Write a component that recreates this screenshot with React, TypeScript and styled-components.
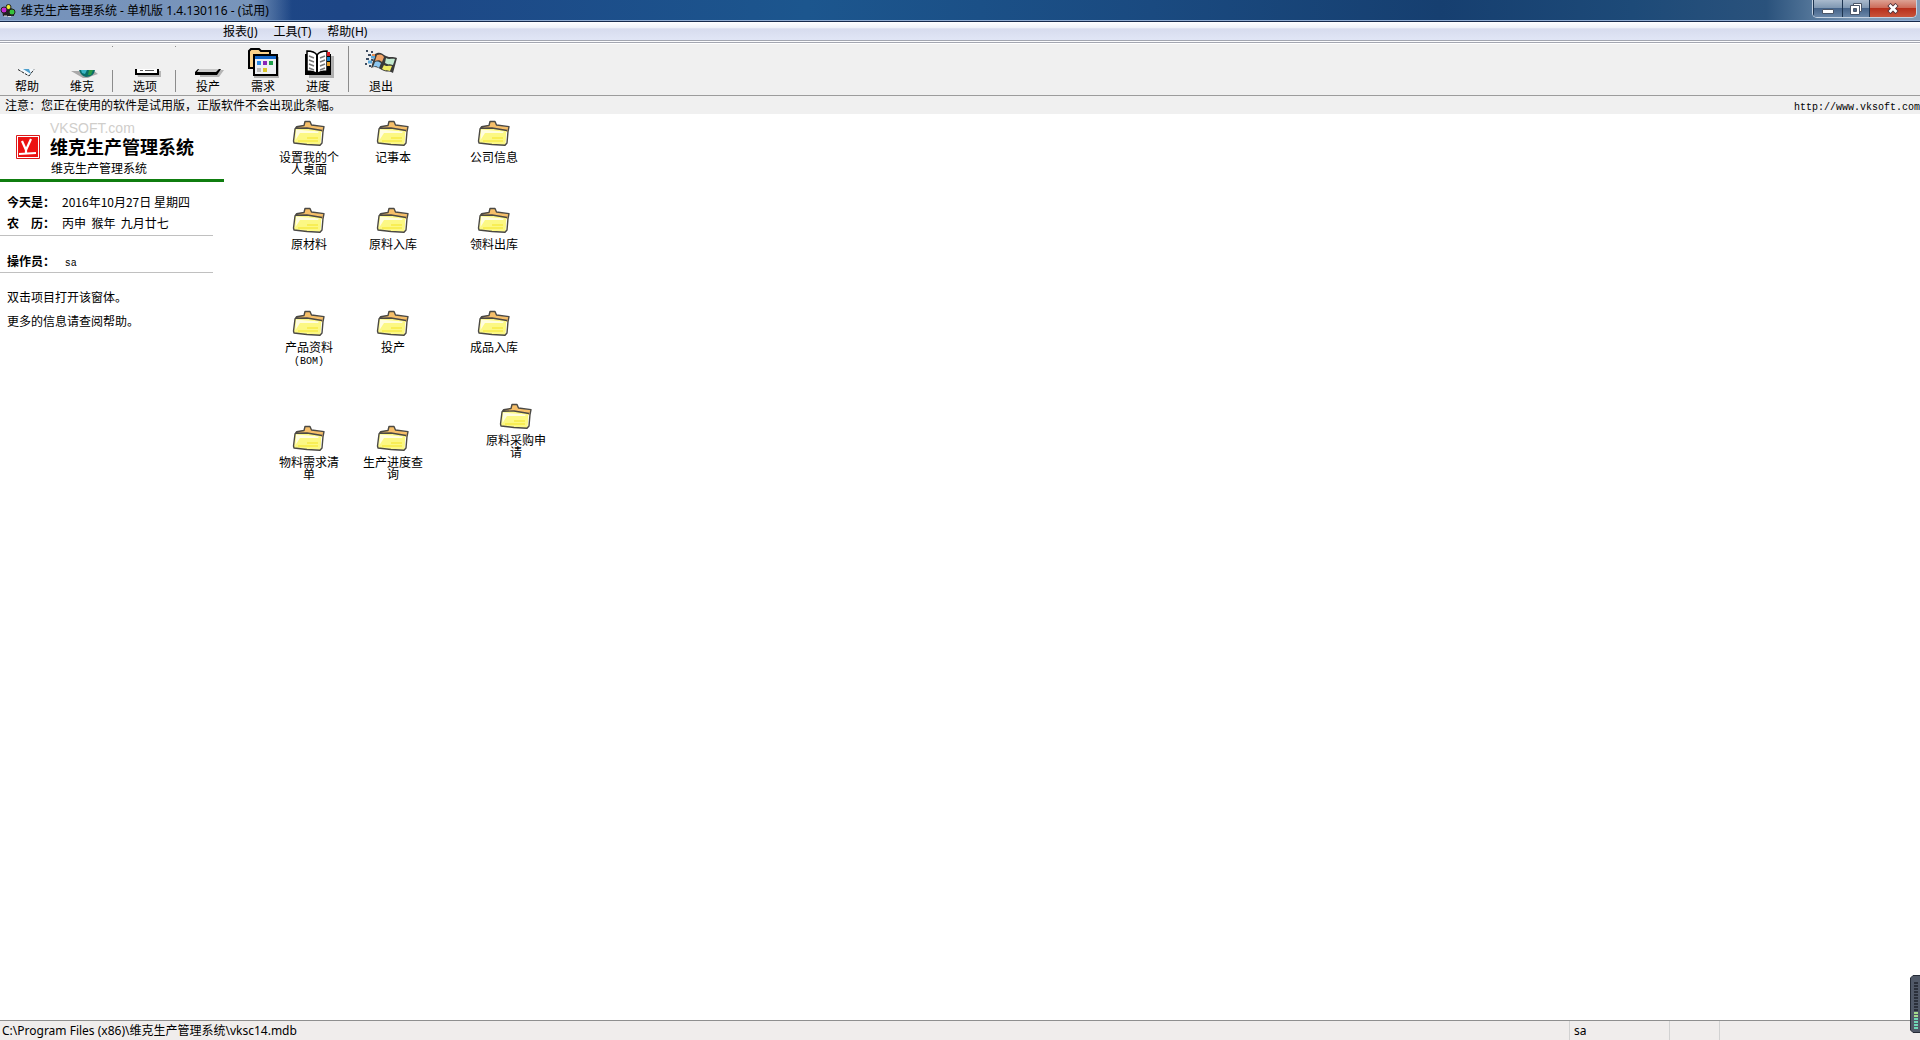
import React from "react";
import styled, { createGlobalStyle } from "styled-components";

const song = `"Noto Sans CJK SC", sans-serif`;
const yahei = `"Noto Sans", "Noto Sans CJK SC", sans-serif`;

const GlobalStyle = createGlobalStyle`
  * { box-sizing: border-box; }
  html, body, #root { height: 100%; margin: 0; }
  body { background: #fff; color: #000; font: 12px/16px ${song}; }
  button { border: 0; padding: 0; margin: 0; background: none; color: inherit; font: inherit; }
  p, h1, h2, dl, dd, dt { margin: 0; font-weight: 400; font-size: 12px; }
`;

const Window = styled.div`
  height: 100vh;
  display: flex;
  flex-direction: column;
  overflow: hidden;
  position: relative;
`;

const TitleBar = styled.header`
  flex: none;
  height: 22px;
  display: flex;
  align-items: flex-start;
  justify-content: space-between;
  padding-right: 3px;
  border-bottom: 1px solid #16294a;
  box-shadow: inset 0 -1px #8fabd0;
  background:
    linear-gradient(90deg, rgba(122, 150, 190, 0.95) 0, rgba(130, 157, 192, 0.9) 250px, rgba(120, 150, 190, 0) 292px),
    linear-gradient(90deg, #1f4b87 0, #1d4585 18%, #1c568e 42%, #1a4a80 60%, #163f70 75%, #1d4a78 85%, #2a527c 92%, #7f9bb8 97%);
`;

const Caption = styled.div`
  display: flex;
  align-items: center;
  gap: 5px;
  height: 20px;
`;

const Title = styled.h1`
  font-family: ${yahei};
  line-height: 20px;
  padding-top: 2px;
  white-space: pre;
`;

const WindowButtons = styled.div`
  display: flex;
  height: 18px;
  border: 1px solid #c4d2e2;
  border-top: 0;
  border-radius: 0 0 5px 5px;
  overflow: hidden;
`;

const WindowButton = styled.button<{ $w: number; $close?: boolean }>`
  width: ${(p) => p.$w}px;
  display: flex;
  align-items: center;
  justify-content: center;
  border-left: 1px solid #1d3450;
  background: ${(p) =>
    p.$close
      ? "linear-gradient(#dda193 0, #cd6c5a 45%, #b8301c 50%, #c9543a 100%)"
      : "linear-gradient(#a9bacd 0, #8098b3 45%, #46648a 50%, #6a87a8 100%)"};
`;

const MenuBar = styled.nav`
  flex: none;
  height: 21px;
  display: flex;
  align-items: center;
  gap: 16px;
  padding: 2px 0 0 223px;
  border-bottom: 3px double #a3a6b0;
  background: linear-gradient(#fff 0, #eef1f8 32%, #d7dcee 38%, #e1e6f6 100%);
`;

const MenuItem = styled.button`
  font-family: ${yahei};
  line-height: 18px;
  white-space: nowrap;
`;

const Toolbar = styled.div`
  flex: none;
  height: 53px;
  display: flex;
  background: #f0f0f0;
  border-top: 1px solid #fff;
  border-bottom: 1px solid #9c9c9c;
`;

const ToolButton = styled.button`
  width: 55px;
  display: flex;
  flex-direction: column;
  align-items: center;
  padding: 4px 1px 0 0;
`;

const ToolSeparator = styled.div<{ $short?: boolean }>`
  width: 8px;
  display: flex;
  flex-direction: column;
  justify-content: space-between;
  padding: 2px 0 3px 2px;

  &::before {
    content: "";
    width: 1px;
    height: 1px;
    background: #8c8c8c;
  }
  &::after {
    content: "";
    width: 1px;
    height: ${(p) => (p.$short ? 22 : 45)}px;
    background: #8c8c8c;
  }
`;

const Notice = styled.div`
  flex: none;
  height: 18px;
  display: flex;
  justify-content: space-between;
  align-items: center;
  padding-left: 5px;
  background: #f0f0f0;
`;

const SmallMono = styled.span`
  font-family: "Liberation Mono", monospace;
  font-size: 10px;
  line-height: 10px;
`;

const SiteLink = styled.a`
  color: #000;
  text-decoration: none;
`;

const Body = styled.div`
  flex: 1;
  min-height: 0;
  display: flex;
`;

const Sidebar = styled.aside`
  width: 224px;
  flex: none;
`;

const Brand = styled.div`
  display: flex;
  align-items: center;
  gap: 10px;
  height: 68px;
  padding: 0 0 0 16px;
  border-bottom: 3px solid #0f7d0f;
`;

const BrandText = styled.div`
  padding-top: 6px;
`;

const BrandSite = styled.p`
  color: #d0cecb;
  font: 14px/16px "Liberation Sans", sans-serif;
`;

const BrandName = styled.h2`
  font-size: 18px;
  line-height: 20px;
  font-weight: 700;
`;

const BrandSub = styled.p`
  line-height: 24px;
  padding-left: 1px;
`;

const InfoBlock = styled.dl<{ $top: number; $bottom: number }>`
  width: 213px;
  padding: ${(p) => `${p.$top}px 0 ${p.$bottom}px 7px`};
  border-bottom: 1px solid #c0c0c0;
`;

const InfoRow = styled.div`
  display: flex;
  height: 21px;
  line-height: 21px;
  white-space: nowrap;
`;

const InfoLabel = styled.dt`
  width: 55px;
  font-weight: 700;
`;

const InfoValue = styled.dd`
  white-space: pre;
`;

const Hints = styled.div`
  padding: 12px 0 0 7px;
  line-height: 24px;
`;

const Desktop = styled.main`
  flex: 1;
  position: relative;
  overflow: hidden;
`;

const Shortcut = styled.button`
  position: absolute;
  width: 60px;
  display: flex;
  flex-direction: column;
  align-items: center;
  gap: 4px;
  line-height: 12px;
`;

const StatusBar = styled.footer`
  flex: none;
  height: 20px;
  display: flex;
  border-top: 1px solid #8f8f8f;
  background: #f0edec;
  font-family: ${yahei};
  line-height: 20px;
`;

const StatusCell = styled.div<{ $w?: number }>`
  ${(p) => (p.$w ? `width: ${p.$w}px; flex: none; border-left: 1px solid #d2d2d2; padding-left: 4px;` : "flex: 1; padding-left: 2px;")}
`;

const Meter = styled.div`
  position: absolute;
  right: 0;
  bottom: 7px;
  width: 10px;
  height: 58px;
`;

function AppIcon() {
  return (
    <svg width="16" height="18" viewBox="0 0 16 18">
      <path d="M2 9 8 5 14 9V15H3Z" fill="#222" />
      <circle cx="4" cy="9" r="3" fill="#c22ad0" stroke="#222" />
      <circle cx="8.5" cy="6" r="2.5" fill="#f2ee38" stroke="#222" />
      <circle cx="12" cy="11" r="3" fill="#35c23c" stroke="#222" />
      <path d="M4 15h3M8 15.500h3" stroke="#ddd" />
    </svg>
  );
}

function FolderIcon() {
  return (
    <svg width="34" height="27" viewBox="0 0 34 27">
      <path d="M4 7 12 5 13 1.500H18L19.500 5 32 7 30.500 12 5 9Z" fill="#f6bf69" />
      <path d="M3 8.500 15 8 29.500 10.500 28.500 25 2 23Z" fill="#fcf884" />
      <path d="M4 9.500 27 11.500 26 13 8 13 3.500 20Z" fill="#fffde0" />
      <path d="M6 21h20M15 18h11" fill="none" stroke="#f8ee55" strokeWidth="2" />
      <path d="M12 5.500 13 1.500H18L19.500 5 32 6.600 31 11.500 30 23 28 25.300 15 24.500 2 23 1.500 21 3 9 4.500 6.800ZM4 8.200 15 8 30 10.500" fill="none" stroke="#4b4944" strokeWidth="1.400" strokeLinejoin="round" />
    </svg>
  );
}

function ToolIcon({ name }: { name: string }) {
  return (
    <svg width="34" height="30" viewBox="0 0 34 30">
      {name === "help" && (
        <>
          <path d="M8 21h17l-4 6-3 1z" fill="#f4f9fd" />
          <path d="M13 21h6l2 5z" fill="#4f9fcc" />
          <path d="M8 21.500l11 6.500 5-6.500" fill="none" stroke="#222" strokeDasharray="3 1" />
        </>
      )}
      {name === "vk" && (
        <>
          <path d="M6 23h23l4 3-6 2-4 2H18z" fill="#a9a9a9" />
          <path d="M14 22h16q-1 7-9 7-5-1-7-7z" fill="#096d68" />
          <path d="M16 22h6l-2 4-3-1z" fill="#39b4c4" />
          <path d="M24 22h4l-2 5-3 0z" fill="#2b9a45" />
        </>
      )}
      {name === "options" && (
        <>
          <path d="M8 23h25v6H10z" fill="#b5b5b5" />
          <path d="M7 21h24v6H7z" fill="#000" />
          <path d="M9 21h20v4H9z" fill="#fff" />
          <path d="M12 22.500h3M17 22.500h9" stroke="#555" />
        </>
      )}
      {name === "make" && (
        <>
          <path d="M9 26l21-4h3l-5 7H9z" fill="#b5b5b5" />
          <path d="M4 24l3-3h23l-4 6H4z" fill="#000" />
          <path d="M8 21h20l-3 3H6z" fill="#c9c9c9" />
        </>
      )}
      {name === "need" && (
        <>
          <path d="M8 9h25v21H8z" fill="#b0b0b0" />
          <path d="M3 20V3l2-2h8l2 2h9v8H10v9z" fill="#fbd38a" stroke="#000" strokeWidth="2" />
          <path d="M8 7h23v20H8z" fill="#eef0f4" stroke="#000" strokeWidth="2" />
          <path d="M9 8h21v3H9z" fill="#1467c8" />
          <path d="M11 13h4v4h-4z" fill="#2c8be6" />
          <path d="M17 13h4v4h-4z" fill="#8a26b8" />
          <path d="M23 13h4v4h-4z" fill="#1da04a" />
          <path d="M11 20h4v4h-4z" fill="#bbb" />
          <path d="M17 20h4v4h-4z" fill="#dac62d" />
        </>
      )}
      {name === "progress" && (
        <>
          <path d="M8 8h25v22H8z" fill="#b0b0b0" />
          <path d="M4 6h26v21H4z" fill="#000" />
          <path d="M6 3c4 0 8 1 10 4 2-3 6-4 10-4v20c-4 0-8 1-10 3-2-2-6-3-10-3z" fill="#fff" stroke="#000" strokeWidth="1.500" />
          <path d="M16 6v19" stroke="#000" strokeWidth="2" />
          <path d="M8 8l5 2M8 12l5 2M8 16l5 2M8 20l5 2M24 8l-5 2M24 12l-5 2M24 16l-5 2M24 20l-5 2" stroke="#777" strokeWidth="1.400" />
          <path d="M26 4h3v4h-3z" fill="#d91824" />
          <path d="M26 9h3v4h-3z" fill="#1782c9" />
          <path d="M26 14h3v4h-3z" fill="#e8a12e" />
        </>
      )}
      {name === "exit" && (
        <>
          <path d="M11 6c5-3 7 0 11 2s7 0 11 2l-4 15c-4-3-6 0-11-3S11 18 7 20z" fill="#3a3a3a" />
          <path d="M13 7c3-1 5-1 7 2l-2 5c-2-2-4-2-7-1z" fill="#f0a468" />
          <path d="M22 10c3 2 6 0 9 1l-2 6c-3-1-5 0-8-2z" fill="#c4ead0" />
          <path d="M11 14c3-1 4 0 6 1l-2 5c-2-2-4-2-6-1z" fill="#8cc6f0" />
          <path d="M20 17c3 2 5 0 8 1l-2 5c-3-1-5 0-8-2z" fill="#f1ec62" />
          <path d="M2 3h2M4 7h3M2 11h3M7 12h2M1 16h2M5 18h2M7 4h2" stroke="#3c4c61" strokeWidth="2" />
          <path d="M7 9h4M4 14h4" stroke="#5aa9dc" strokeWidth="3" />
          <path d="M8 7h3" stroke="#e59055" strokeWidth="2" />
        </>
      )}
    </svg>
  );
}

function LogoIcon() {
  return (
    <svg width="24" height="24" viewBox="0 0 24 24">
      <path d="M.5.5h23v23H.5z" fill="#fff" stroke="#d91a1a" />
      <path d="M2 2h20v20H2z" fill="#ec1111" />
      <path d="M6 6l4 9L15 4M10 15v3M3 19l17-1" fill="none" stroke="#fff" strokeWidth="2.200" />
    </svg>
  );
}

function MeterIcon() {
  const bars = Array.from({ length: 16 }, (_, i) => i);
  return (
    <svg width="10" height="58" viewBox="0 0 10 58">
      <path d="M11 .5H3L.5 3v52L3 57.500H11z" fill="#515968" stroke="#252b36" />
      {bars.map((i) => (
        <path key={i} d={`M4 ${8 + i * 3}h4`} stroke={i < 10 ? "#2b303b" : i < 12 ? "#a6dc8c" : "#6fd8b6"} strokeWidth="2" />
      ))}
    </svg>
  );
}

const shortcuts = [
  { label: "设置我的个人桌面", x: 55, y: 6 },
  { label: "记事本", x: 139, y: 6 },
  { label: "公司信息", x: 240, y: 6 },
  { label: "原材料", x: 55, y: 93 },
  { label: "原料入库", x: 139, y: 93 },
  { label: "领料出库", x: 240, y: 93 },
  { label: "产品资料", note: "(BOM)", x: 55, y: 196 },
  { label: "投产", x: 139, y: 196 },
  { label: "成品入库", x: 240, y: 196 },
  { label: "物料需求清单", x: 55, y: 311 },
  { label: "生产进度查询", x: 139, y: 311 },
  { label: "原料采购申请", x: 262, y: 289 },
];

function Tool({ name, label }: { name: string; label: string }) {
  return (
    <ToolButton>
      <ToolIcon name={name} />
      {label}
    </ToolButton>
  );
}

export default function App() {
  return (
    <Window>
      <GlobalStyle />
      <TitleBar>
        <Caption>
          <AppIcon />
          <Title>维克生产管理系统 - 单机版 1.4.130116 - (试用)</Title>
        </Caption>
        <WindowButtons>
          <WindowButton $w={29} aria-label="最小化">
            <svg width="12" height="12" viewBox="0 0 12 12"><path d="M.5 6.500h11v4H.5z" fill="#fff" stroke="#4b5668" /></svg>
          </WindowButton>
          <WindowButton $w={27} aria-label="还原">
            <svg width="13" height="13" viewBox="0 0 13 13">
              <path d="M3.500 1.500h8v8h-8z" fill="#fff" stroke="#4b5668" />
              <path d="M.5 3.500h9v9h-9z" fill="#fff" stroke="#4b5668" />
              <path d="M3.500 6.500h3v3h-3z" fill="#4b6484" stroke="#4b5668" />
            </svg>
          </WindowButton>
          <WindowButton $w={47} $close aria-label="关闭">
            <svg width="12" height="11" viewBox="0 0 12 11">
              <path d="M2 1.500 10 9.500M10 1.500 2 9.500" stroke="#51323a" strokeWidth="4.500" />
              <path d="M2.500 2 9.500 9M9.500 2 2.500 9" stroke="#fff" strokeWidth="2.600" />
            </svg>
          </WindowButton>
        </WindowButtons>
      </TitleBar>
      <MenuBar>
        <MenuItem>报表(J)</MenuItem>
        <MenuItem>工具(T)</MenuItem>
        <MenuItem>帮助(H)</MenuItem>
      </MenuBar>
      <Toolbar>
        <Tool name="help" label="帮助" />
        <Tool name="vk" label="维克" />
        <ToolSeparator $short />
        <Tool name="options" label="选项" />
        <ToolSeparator $short />
        <Tool name="make" label="投产" />
        <Tool name="need" label="需求" />
        <Tool name="progress" label="进度" />
        <ToolSeparator />
        <Tool name="exit" label="退出" />
      </Toolbar>
      <Notice>
        <span>注意：您正在使用的软件是试用版，正版软件不会出现此条幅。</span>
        <SiteLink href="#"><SmallMono>http://www.vksoft.com</SmallMono></SiteLink>
      </Notice>
      <Body>
        <Sidebar>
          <Brand>
            <LogoIcon />
            <BrandText>
              <BrandSite>VKSOFT.com</BrandSite>
              <BrandName>维克生产管理系统</BrandName>
              <BrandSub>维克生产管理系统</BrandSub>
            </BrandText>
          </Brand>
          <InfoBlock $top={9} $bottom={2}>
            <InfoRow><InfoLabel>今天是：</InfoLabel><InfoValue>2016年10月27日 星期四</InfoValue></InfoRow>
            <InfoRow><InfoLabel>农　历：</InfoLabel><InfoValue>丙申  猴年  九月廿七</InfoValue></InfoRow>
          </InfoBlock>
          <InfoBlock $top={14} $bottom={1}>
            <InfoRow><InfoLabel>操作员：</InfoLabel><InfoValue> <SmallMono>sa</SmallMono></InfoValue></InfoRow>
          </InfoBlock>
          <Hints>
            <p>双击项目打开该窗体。</p>
            <p>更多的信息请查阅帮助。</p>
          </Hints>
        </Sidebar>
        <Desktop>
          {shortcuts.map((s) => (
            <Shortcut key={s.label} style={{ left: s.x, top: s.y }}>
              <FolderIcon />
              <span>
                {s.label}
                {s.note && <SmallMono>{s.note}</SmallMono>}
              </span>
            </Shortcut>
          ))}
        </Desktop>
      </Body>
      <StatusBar>
        <StatusCell>C:\Program Files (x86)\维克生产管理系统\vksc14.mdb</StatusCell>
        <StatusCell $w={100}>sa</StatusCell>
        <StatusCell $w={50} />
        <StatusCell $w={201} />
      </StatusBar>
      <Meter>
        <MeterIcon />
      </Meter>
    </Window>
  );
}
